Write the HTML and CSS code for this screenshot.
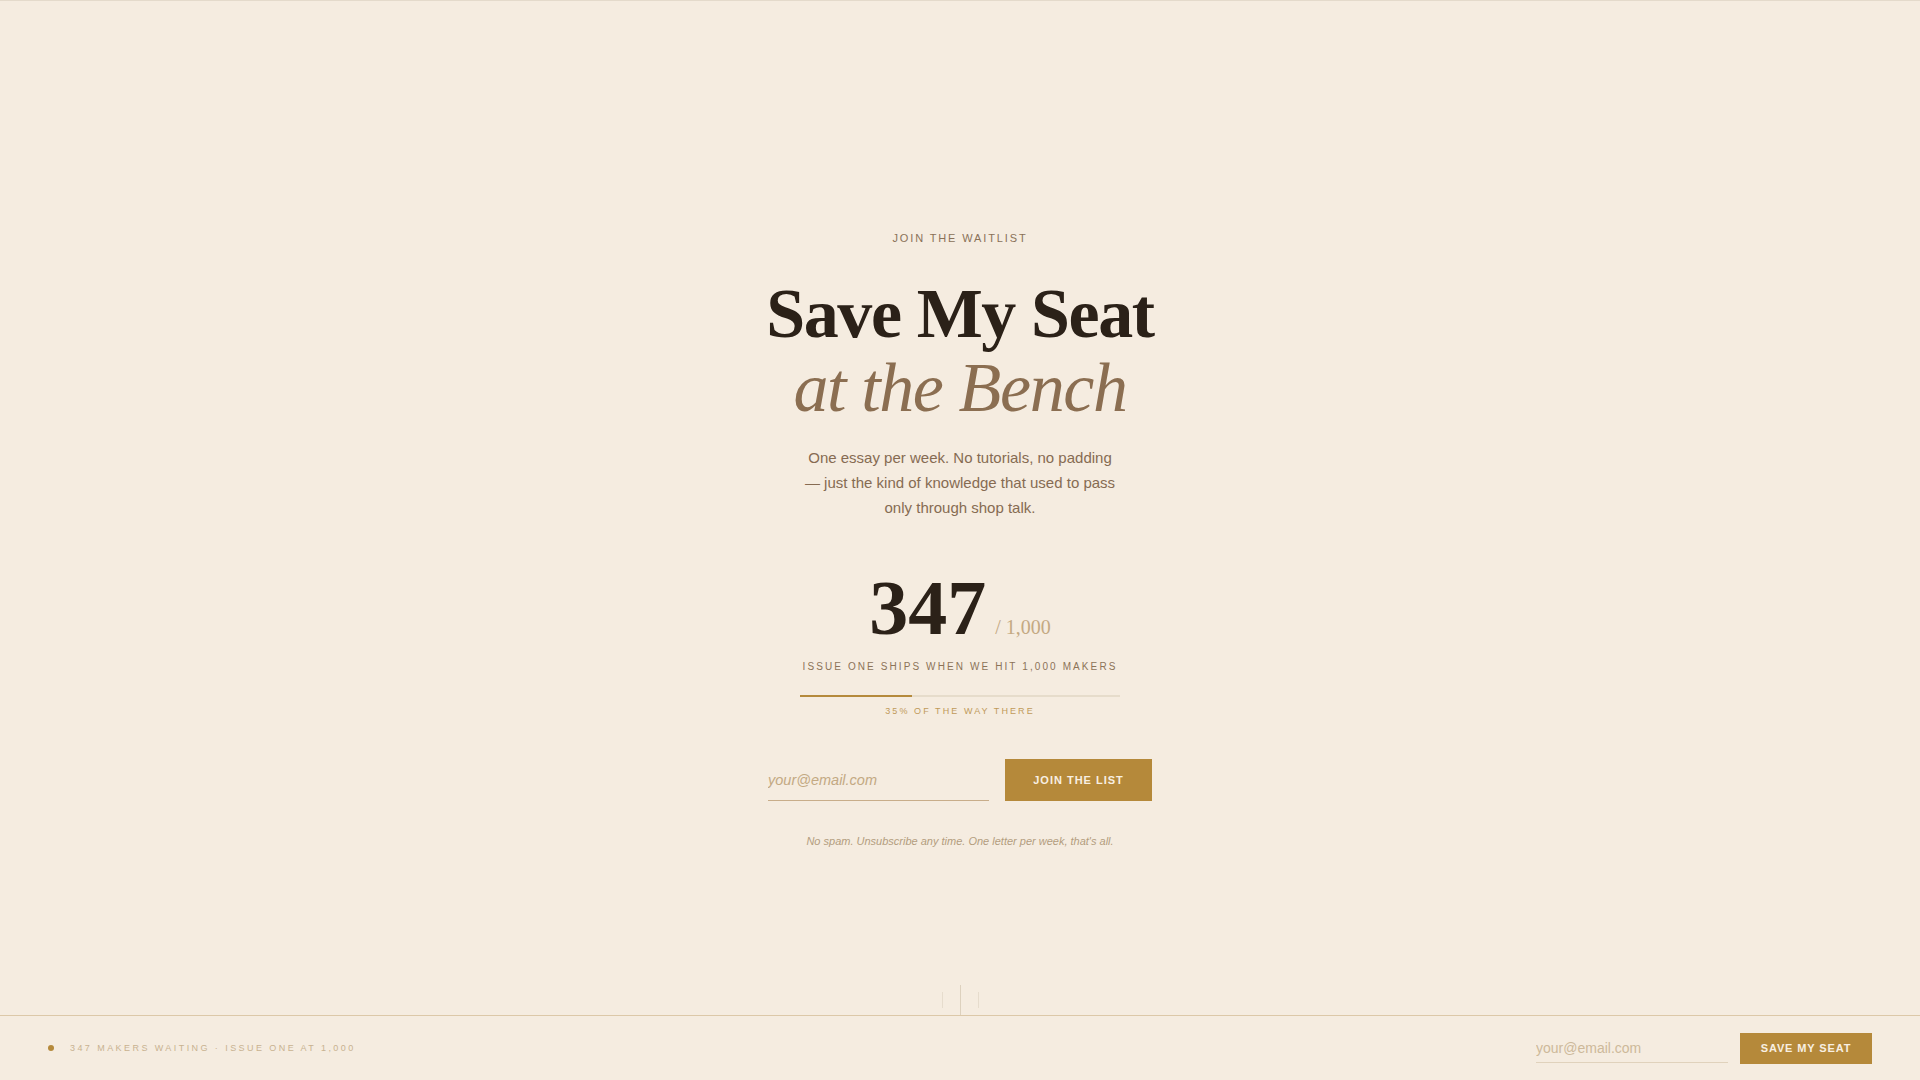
FILE: index.html
```html
<!DOCTYPE html>
<html lang="en">
<head>
<meta charset="utf-8">
<title>Save My Seat at the Bench</title>
<link rel="stylesheet" href="styles.css">
</head>
<body>
<div class="page">
  <main class="main">
    <p class="eyebrow">JOIN THE WAITLIST</p>
    <h1 class="title"><span class="title-main">Save My Seat</span><span class="title-sub">at the Bench</span></h1>
    <p class="lede">One essay per week. No tutorials, no padding — just the kind of knowledge that used to pass only through shop talk.</p>
    <div class="count"><span class="count-num">347</span><span class="count-total">/ 1,000</span></div>
    <p class="count-label">ISSUE ONE SHIPS WHEN WE HIT 1,000 MAKERS</p>
    <div class="bar"><div class="bar-fill" style="width:35%"></div></div>
    <p class="bar-label">35% OF THE WAY THERE</p>
    <form class="form">
      <input class="form-input" type="email" placeholder="your@email.com">
      <button class="form-btn" type="button">JOIN THE LIST</button>
    </form>
    <p class="note">No spam. Unsubscribe any time. One letter per week, that's all.</p>
    <div class="scroll">
      <span class="scroll-line"></span>
      <span class="scroll-line scroll-line-main"></span>
      <span class="scroll-line"></span>
    </div>
  </main>
  <footer class="foot">
    <div class="foot-status"><span class="foot-dot"></span><span class="foot-text">347 MAKERS WAITING · ISSUE ONE AT 1,000</span></div>
    <form class="foot-form">
      <input class="foot-input" type="email" placeholder="your@email.com">
      <button class="foot-btn" type="button">SAVE MY SEAT</button>
    </form>
  </footer>
</div>
</body>
</html>
```
FILE: styles.css
```css
* { box-sizing: border-box; }
html, body { margin: 0; padding: 0; }
body {
  background: #f5ece0;
  font-family: "Liberation Sans", Arial, sans-serif;
  color: #8a7158;
  border-top: 1px solid #e4dacb;
}
.page {
  height: calc(100vh - 1px);
  display: grid;
  grid-template-rows: 1fr auto;
}
.main {
  display: flex;
  flex-direction: column;
  align-items: center;
  padding-top: 230px;
  text-align: center;
}
.eyebrow {
  margin: 0;
  font-size: 11px;
  line-height: 14px;
  letter-spacing: 0.17em;
  color: #8a7158;
}
.title {
  margin: 34px 0 0;
  font-family: "Liberation Serif", "Times New Roman", serif;
  font-size: 70px;
  line-height: 70px;
  letter-spacing: -0.02em;
  display: flex;
  flex-direction: column;
  align-items: center;
}
.title-main { font-weight: 700; color: #2b2118; }
.title-sub { font-weight: 400; font-style: italic; color: #8b6e51; margin-top: 4px; }
.lede {
  margin: 22px 0 0;
  max-width: 320px;
  font-size: 15px;
  line-height: 25px;
  color: #866b52;
}
.count {
  margin-top: 49px;
  font-family: "Liberation Serif", "Times New Roman", serif;
  height: 78px;
  display: flex;
  align-items: baseline;
}
.count-num { font-size: 78px; line-height: 78px; font-weight: 700; color: #2b2118; }
.count-total { font-size: 20px; line-height: 20px; color: #c4a983; margin-left: 9px; }
.count-label {
  margin: 13px 0 0;
  font-size: 10px;
  line-height: 14px;
  letter-spacing: 0.21em;
  color: #8c7358;
}
.bar {
  margin-top: 21px;
  width: 320px;
  height: 2px;
  background: #e6dccb;
}
.bar-fill { height: 100%; background: #b58a3c; }
.bar-label {
  margin: 7px 0 0;
  font-size: 9px;
  line-height: 14px;
  letter-spacing: 0.23em;
  color: #c09a5a;
}
.form {
  margin-top: 41px;
  display: flex;
  gap: 16px;
}
.form-input {
  width: 221px;
  height: 42px;
  padding: 0;
  border: 0;
  border-bottom: 1px solid #c8ad8a;
  background: transparent;
  font-family: "Liberation Sans", Arial, sans-serif;
  font-size: 14.5px;
  font-style: italic;
  color: #6e563f;
  outline: none;
}
.form-input::placeholder { color: #c3a983; font-style: italic; }
.form-btn {
  width: 147px;
  height: 42px;
  border: 0;
  background: #b5893a;
  color: #f8efe2;
  font-family: "Liberation Sans", Arial, sans-serif;
  font-size: 11px;
  font-weight: 700;
  letter-spacing: 0.09em;
  cursor: pointer;
}
.note {
  margin: 33px 0 0;
  font-size: 11px;
  line-height: 14px;
  font-style: italic;
  color: #b39d7e;
}
.scroll {
  margin-top: auto;
  display: flex;
  align-items: center;
  gap: 17px;
  height: 30px;
}
.scroll-line { width: 1px; height: 16px; background: #e6dccd; }
.scroll-line-main { height: 30px; background: #ddd1be; }
.foot {
  height: 65px;
  border-top: 1px solid #dcc8a8;
  padding: 0 48px;
  display: flex;
  align-items: center;
  justify-content: space-between;
}
.foot-status { display: flex; align-items: center; gap: 16px; }
.foot-dot { width: 6px; height: 6px; border-radius: 50%; background: #b58a3c; }
.foot-text {
  font-size: 9px;
  letter-spacing: 0.27em;
  color: #c8b290;
}
.foot-form { display: flex; align-items: center; gap: 12px; }
.foot-input {
  width: 192px;
  height: 29px;
  padding: 0;
  border: 0;
  border-bottom: 1px solid #e0d2bc;
  background: transparent;
  font-family: "Liberation Sans", Arial, sans-serif;
  font-size: 14px;
  color: #6e563f;
  outline: none;
}
.foot-input::placeholder { color: #cdb99a; }
.foot-btn {
  width: 132px;
  height: 31px;
  border: 0;
  background: #b5893a;
  color: #f8efe2;
  font-family: "Liberation Sans", Arial, sans-serif;
  font-size: 11px;
  font-weight: 700;
  letter-spacing: 0.08em;
  cursor: pointer;
}
```
